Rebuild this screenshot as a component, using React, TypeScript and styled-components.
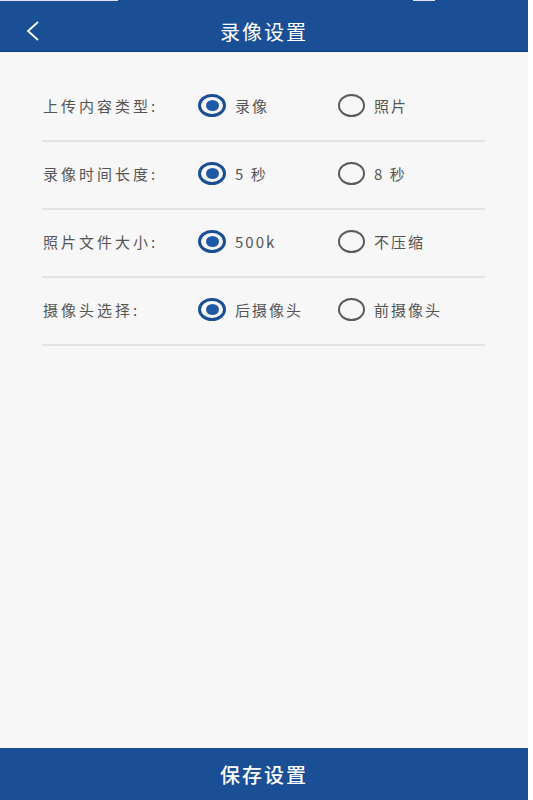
import { useState } from "react";
import styled, { createGlobalStyle } from "styled-components";

const GlobalStyle = createGlobalStyle`
  html, body {
    margin: 0;
    padding: 0;
    background: #ffffff;
    font-family: "Noto Sans CJK SC", "Noto Sans", sans-serif;
  }
`;

const BLUE = "#1a4f95";

const StyledPage = styled.div`
  width: 528px;
  height: 800px;
  background-color: #f7f7f7;
  display: flex;
  flex-direction: column;
`;

const StyledHeader = styled.header`
  height: 51px;
  background-color: ${BLUE};
  border-bottom: 1px solid #123f7a;
  display: flex;
  flex-direction: column;
`;

const StyledStatusStrip = styled.div`
  height: 2px;
  display: flex;
  align-items: flex-start;
`;

const StyledStatusMark = styled.div<{ width: number; offset: number }>`
  width: ${({ width }) => width}px;
  margin-left: ${({ offset }) => offset}px;
  height: 1px;
  background-color: rgba(255, 255, 255, 0.85);
`;

const StyledHeaderBar = styled.div`
  flex: 1;
  display: grid;
  grid-template-columns: 60px 1fr 60px;
  align-items: center;
  padding-top: 9px;
`;

const StyledBack = styled.button`
  background: none;
  border: none;
  padding: 0 0 0 25px;
  height: 100%;
  display: flex;
  align-items: center;
  cursor: pointer;
`;

const StyledTitle = styled.h1`
  margin: 0;
  text-align: center;
  color: #ffffff;
  font-size: 20px;
  font-weight: 400;
  letter-spacing: 2px;
`;

const StyledContent = styled.main`
  flex: 1;
  padding: 22px 43px 0 42px;
`;

const StyledRow = styled.div`
  box-sizing: border-box;
  height: 68px;
  padding-bottom: 3px;
  border-bottom: 2px solid #e3e3e3;
  display: flex;
  align-items: center;
`;

const StyledLabel = styled.div`
  width: 155px;
  padding-left: 1px;
  color: #555555;
  font-size: 15px;
  letter-spacing: 3px;
`;

const StyledOption = styled.label<{ wide?: boolean }>`
  width: ${({ wide }) => (wide ? 140 : 130)}px;
  display: flex;
  align-items: center;
  gap: 9px;
  color: #555555;
  font-size: 15px;
  letter-spacing: 2px;
  cursor: pointer;
`;

const StyledRadio = styled.span<{ checked: boolean }>`
  width: ${({ checked }) => (checked ? 22 : 23)}px;
  height: ${({ checked }) => (checked ? 17 : 19)}px;
  border-radius: 50%;
  border: ${({ checked }) =>
    checked ? `3px solid ${BLUE}` : "2px solid #5a5a5a"};
  display: flex;
  align-items: center;
  justify-content: center;
  flex-shrink: 0;
`;

const StyledDot = styled.span`
  width: 13px;
  height: 11px;
  border-radius: 50%;
  background-color: #1f5aa6;
`;

const StyledSaveButton = styled.button`
  height: 52px;
  border: none;
  background-color: ${BLUE};
  color: #ffffff;
  font-family: "Noto Sans CJK SC", sans-serif;
  font-size: 20px;
  font-weight: 500;
  letter-spacing: 2px;
  cursor: pointer;
  padding-top: 2px;
`;

const SETTINGS = [
  { label: "上传内容类型:", options: ["录像", "照片"] },
  { label: "录像时间长度:", options: ["5 秒", "8 秒"] },
  { label: "照片文件大小:", options: ["500k", "不压缩"] },
  { label: "摄像头选择:", options: ["后摄像头", "前摄像头"] },
];

export default function App() {
  const [selected, setSelected] = useState<number[]>([0, 0, 0, 0]);

  const onPick = (row: number, opt: number) => {
    setSelected((prev) => prev.map((v, i) => (i === row ? opt : v)));
  };

  return (
    <StyledPage>
      <GlobalStyle />
      <StyledHeader>
        <StyledStatusStrip>
          <StyledStatusMark width={118} offset={0} />
          <StyledStatusMark width={22} offset={295} />
        </StyledStatusStrip>
        <StyledHeaderBar>
          <StyledBack aria-label="返回">
            <svg width="15" height="22" viewBox="0 0 15 22">
              <path
                d="M13 2 L3 11 L13 20"
                fill="none"
                stroke="#ffffff"
                strokeWidth="1.8"
              />
            </svg>
          </StyledBack>
          <StyledTitle>录像设置</StyledTitle>
          <div />
        </StyledHeaderBar>
      </StyledHeader>
      <StyledContent>
        {SETTINGS.map((row, r) => (
          <StyledRow key={row.label}>
            <StyledLabel>{row.label}</StyledLabel>
            {row.options.map((opt, o) => (
              <StyledOption key={opt} wide={o === 0} onClick={() => onPick(r, o)}>
                <StyledRadio checked={selected[r] === o}>
                  {selected[r] === o && <StyledDot />}
                </StyledRadio>
                {opt}
              </StyledOption>
            ))}
          </StyledRow>
        ))}
      </StyledContent>
      <StyledSaveButton>保存设置</StyledSaveButton>
    </StyledPage>
  );
}
